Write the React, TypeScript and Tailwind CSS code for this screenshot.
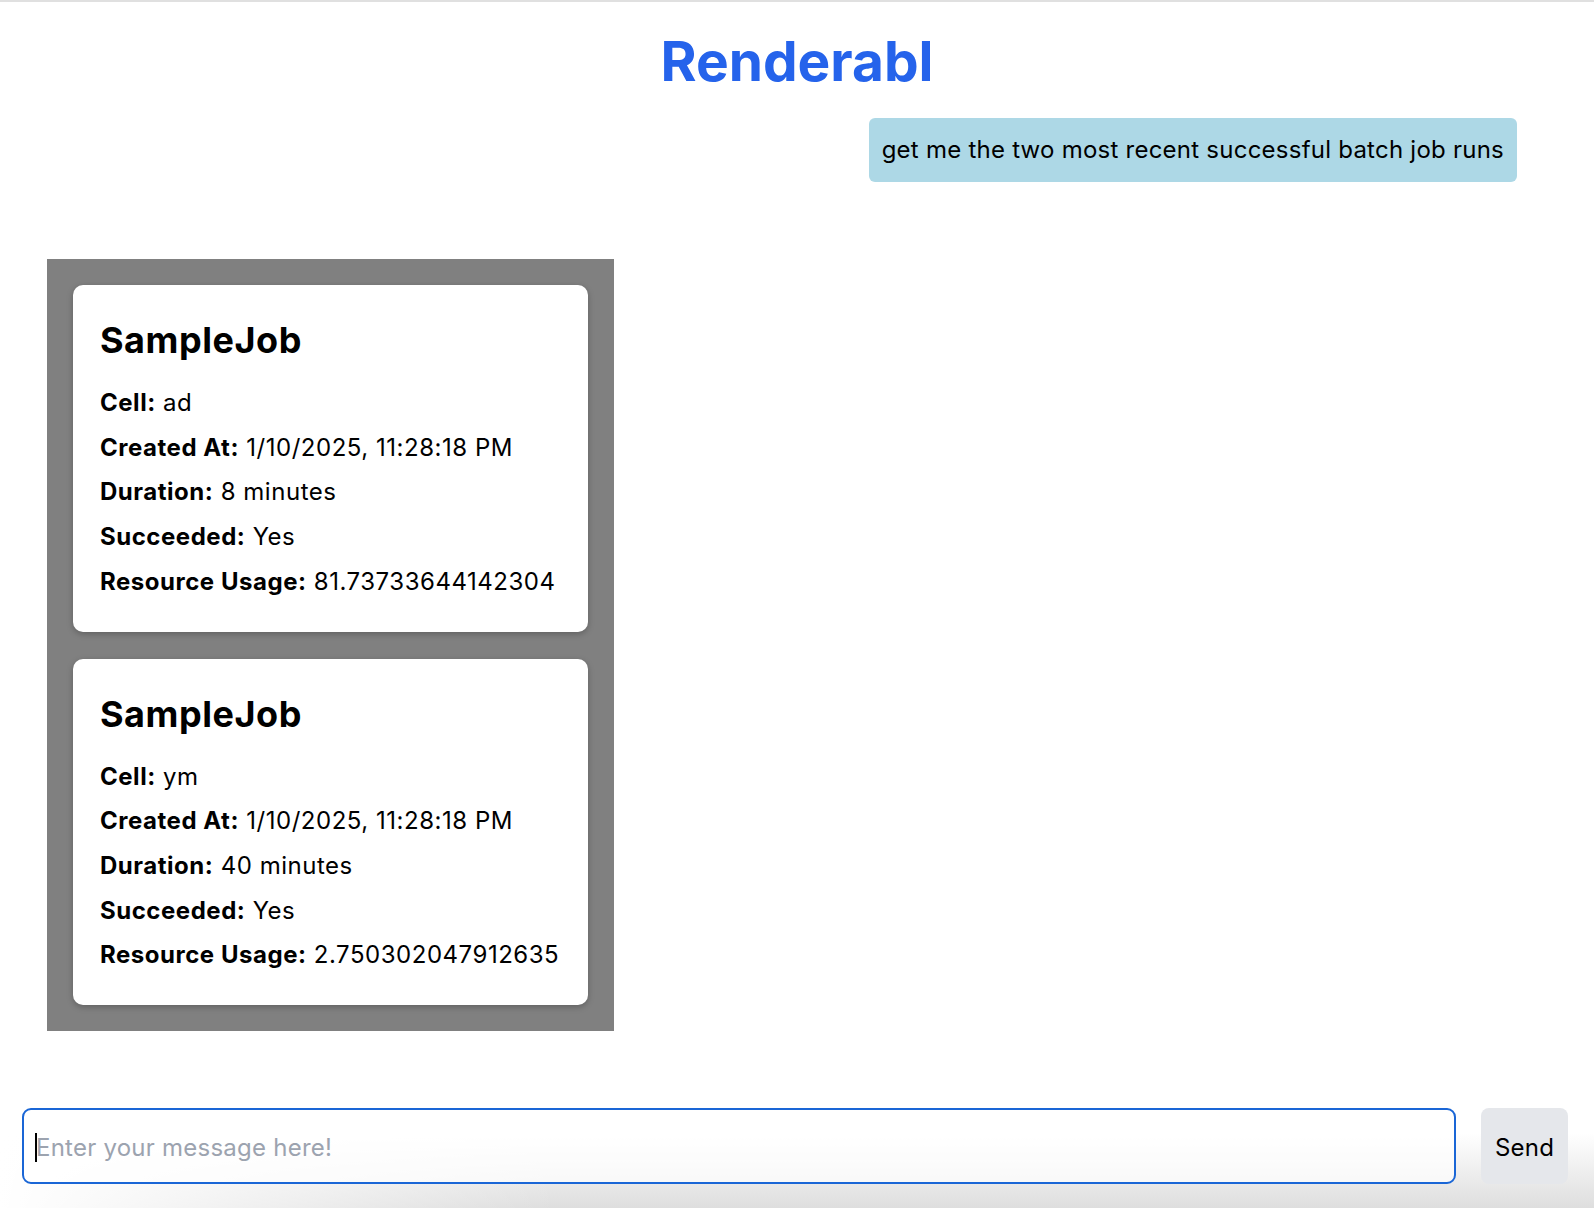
import { useState } from "react";

type Job = {
    name: string;
    cell: string;
    createdAt: string;
    duration: string;
    succeeded: string;
    resourceUsage: string;
};

const jobs: Job[] = [
    {
        name: "SampleJob",
        cell: "ad",
        createdAt: "1/10/2025, 11:28:18 PM",
        duration: "8 minutes",
        succeeded: "Yes",
        resourceUsage: "81.73733644142304",
    },
    {
        name: "SampleJob",
        cell: "ym",
        createdAt: "1/10/2025, 11:28:18 PM",
        duration: "40 minutes",
        succeeded: "Yes",
        resourceUsage: "2.750302047912635",
    },
];

function JobCard({ job }: { job: Job }) {
    const rows: [string, string][] = [
        ["Cell:", job.cell],
        ["Created At:", job.createdAt],
        ["Duration:", job.duration],
        ["Succeeded:", job.succeeded],
        ["Resource Usage:", job.resourceUsage],
    ];

    return (
        <div className="bg-white rounded-[10px] shadow-[0_2px_6px_rgba(0,0,0,0.25)] pl-[27px] pr-[20px] pt-[35px] pb-[27px]">
            <h2 className="text-[36px] leading-[40px] font-bold tracking-[0.015em] text-black">
                {job.name}
            </h2>
            <div className="mt-[21px] flex flex-col">
                {rows.map(([label, value]) => (
                    <p
                        key={label}
                        className="whitespace-nowrap text-[24px] leading-[44.7px] tracking-[0.022em] text-black"
                    >
                        <span className="font-bold">{label}</span> {value}
                    </p>
                ))}
            </div>
        </div>
    );
}

export default function App() {
    const [message, setMessage] = useState("");

    return (
        <div className="min-h-screen flex flex-col bg-white font-['Inter','Liberation_Sans',sans-serif] border-t-2 border-[#e0e0e0]">
            {/* Header */}
            <h1 className="mt-[32px] text-center text-[55px] leading-[55px] font-bold text-[#2563eb]">
                Renderabl
            </h1>

            {/* User message */}
            <div className="mt-[29px] flex justify-end pr-[77px]">
                <div className="bg-[#add8e6] rounded-[6px] px-[13px] py-4 text-[24px] leading-[32px] tracking-[0.01em] text-black">
                    get me the two most recent successful batch job runs
                </div>
            </div>

            {/* Result panel */}
            <div className="mt-[77px] ml-[47px] w-[567px] bg-[#808080] p-[26px] flex flex-col gap-[27px]">
                {jobs.map((job, i) => (
                    <JobCard key={i} job={job} />
                ))}
            </div>

            {/* Input bar */}
            <div className="mt-auto px-[22px] pr-[26px] pt-6 pb-6 flex items-stretch gap-[25px] bg-[linear-gradient(to_right,#ffffff_0%,rgba(255,255,255,0)_35%),linear-gradient(to_bottom,#ffffff_40%,#dedede_100%)]">
                <div className="relative flex-1">
                    <input
                        value={message}
                        onChange={(e) => setMessage(e.target.value)}
                        placeholder="Enter your message here!"
                        className="w-full h-[76px] rounded-[9px] border-[2.5px] border-[#1a66d6] bg-white/70 pl-[12px] pt-[2px] text-[24px] tracking-[0.01em] text-black placeholder:text-[#9ca3af] outline-none"
                    />
                    {message === "" && (
                        <span className="absolute left-[13px] top-[25px] h-[29px] w-[2px] bg-black" />
                    )}
                </div>
                <button className="w-[87px] h-[76px] rounded-[8px] bg-[#e5e7eb] pt-[3px] text-[24px] tracking-[0.01em] text-black">
                    Send
                </button>
            </div>
        </div>
    );
}
